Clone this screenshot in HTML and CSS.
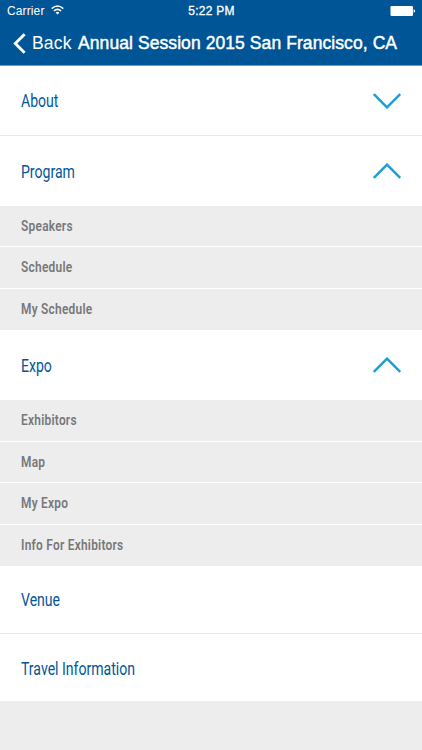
FILE: index.html
```html
<!DOCTYPE html>
<html lang="en">
<head>
<meta charset="utf-8">
<title>Annual Session 2015</title>
<link rel="stylesheet" href="styles.css">
</head>
<body>
<header class="header">
  <div class="status">
    <div class="carrier"><span>Carrier</span>
      <svg class="wifi" width="13" height="10" viewBox="0 0 13 10" fill="none" stroke="#fff" stroke-width="1.5"><path d="M.7 3.6Q6.5-1.5 12.3 3.6M2.9 6Q6.5 2.8 10.1 6"/><path d="M4.6 7.5Q6.5 6 8.4 7.5L6.5 9.5Z" fill="#fff" stroke="none"/></svg>
    </div>
    <span class="time">5:22 PM</span>
    <svg class="battery" width="26" height="10" viewBox="0 0 26 10" fill="#fff"><rect x=".5" width="22.5" height="10" rx="1.2"/><path d="M23.6 3.3Q25.2 3.7 25.2 5T23.6 6.7Z"/></svg>
  </div>
  <nav class="nav">
    <svg class="chevron" width="13" height="21" viewBox="0 0 13 21" fill="none" stroke="#fff" stroke-width="2.9"><path d="M11.6 1.2 2.3 10.5l9.3 9.3"/></svg>
    <span class="back">Back</span>
    <h1 class="title">Annual Session 2015 San Francisco, CA</h1>
  </nav>
</header>
<main>
  <section class="row about"><span class="label">About</span><svg class="arrow" width="28" height="16" viewBox="0 0 28 16"><path d="M.8 1 14 14.4 27.2 1"/></svg></section>
  <section class="row program"><span class="label">Program</span><svg class="arrow" width="28" height="16" viewBox="0 0 28 16"><path d="M.8 15 14 1.6 27.2 15"/></svg></section>
  <ul class="sub three">
    <li><span>Speakers</span></li>
    <li><span>Schedule</span></li>
    <li><span>My Schedule</span></li>
  </ul>
  <section class="row expo"><span class="label">Expo</span><svg class="arrow" width="28" height="16" viewBox="0 0 28 16"><path d="M.8 15 14 1.6 27.2 15"/></svg></section>
  <ul class="sub four">
    <li><span>Exhibitors</span></li>
    <li><span>Map</span></li>
    <li><span>My Expo</span></li>
    <li><span>Info For Exhibitors</span></li>
  </ul>
  <section class="row venue"><span class="label">Venue</span></section>
  <section class="row travel"><span class="label">Travel Information</span></section>
</main>
</body>
</html>
```
FILE: styles.css
```css
* { box-sizing: border-box; }
body { margin: 0; height: 750px; background: #ededed; font-family: "Liberation Sans", Arial, sans-serif; overflow: hidden; }
.header { height: 66px; background: #005596; color: #fff; border-bottom: 1px solid #6d9fc5; }
.status { height: 22px; display: grid; grid-template-columns: 1fr auto 1fr; align-items: center; padding: 0 6px 0 7px; font-size: 12px; }
.carrier { display: flex; align-items: center; gap: 6px; letter-spacing: .12px; }
.wifi { margin-top: -2px; }
.time { font-size: 12px; letter-spacing: .25px; -webkit-text-stroke: .3px #fff; }
.battery { justify-self: end; }
.nav { height: 43px; display: flex; align-items: center; padding-left: 13px; white-space: nowrap; }
.back { width: 46px; margin-left: 6px; font-size: 17.5px; letter-spacing: .2px; }
.title { margin: 0; font-size: 17.5px; font-weight: 400; -webkit-text-stroke: .45px #fff; letter-spacing: .08px; }
.row { display: flex; align-items: center; justify-content: space-between; padding: 0 21px; background: #fff; }
.about { height: 70px; border-bottom: 1px solid #e9e9e9; }
.program { height: 70px; }
.expo { height: 70px; }
.venue { height: 68px; border-bottom: 1px solid #e9e9e9; }
.travel { height: 67px; padding-top: 1px; }
.label { color: #00569a; font-family: Roboto, sans-serif; font-size: 19px; transform: scaleX(.74); transform-origin: 0 50%; }
.arrow { fill: none; stroke: #189fd4; stroke-width: 2.4; }
.sub { list-style: none; margin: 0; padding: 0; display: grid; grid-auto-rows: 1fr; }
.three { height: 124px; }
.four { height: 166px; }
.sub li { display: flex; align-items: center; padding: 0 21px; border-bottom: 1px solid #fff; }
.sub li:last-child { border-bottom: 0; }
.sub span { color: #77787b; font-family: Roboto, sans-serif; font-size: 14px; font-weight: 600; letter-spacing: .3px; transform: scaleX(.85); transform-origin: 0 50%; }
```
